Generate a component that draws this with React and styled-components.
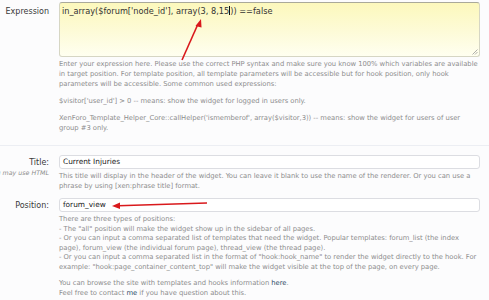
import React from "react";
import styled, { createGlobalStyle } from "styled-components";

const Global = createGlobalStyle`
  html, body { margin: 0; padding: 0; background: #fcfcfd; }
  body { width: 489px; height: 300px; overflow: hidden; font-family: "DejaVu Sans", Verdana, sans-serif; }
`;

const Page = styled.div`
  position: relative;
  width: 489px;
  padding-top: 2px;
`;

const Section = styled.div`
  padding-bottom: ${(p) => p.$pb || 0}px;
  border-bottom: ${(p) => (p.$sep ? "1px solid #eceef3" : "none")};
  margin-bottom: ${(p) => p.$mb || 0}px;
`;

const Row = styled.div`
  display: grid;
  grid-template-columns: 49px 421px;
  column-gap: 10px;
  margin-bottom: ${(p) => p.$mb || 0}px;
`;

const LabelCell = styled.div`
  display: flex;
  flex-direction: column;
  align-items: flex-end;
  padding-top: ${(p) => p.$pt || 0}px;
  min-width: 0;
`;

const Label = styled.div`
  font-size: 8px;
  color: #3a3a3a;
  white-space: nowrap;
  line-height: 10px;
`;

const Hint = styled.div`
  font-size: 6.3px;
  font-style: italic;
  color: #8c8c8c;
  white-space: nowrap;
  line-height: 8px;
  margin-top: 1px;
`;

const Field = styled.div`
  min-width: 0;
`;

const TextArea = styled.div`
  position: relative;
  height: 55px;
  box-sizing: border-box;
  border: 1px solid #d6d6c4;
  border-top-color: #a9a99a;
  border-radius: 3px;
  background: linear-gradient(to bottom, #fcf8bc 0%, #fdfbd8 55%, #fffff0 100%);
  padding: 3px 2px;
  font-size: 8.2px;
  line-height: 10px;
  color: #333;
  white-space: nowrap;
`;

const Caret = styled.span`
  display: inline-block;
  width: 1px;
  height: 9px;
  background: #111;
  vertical-align: -1px;
`;

const Grip = styled.svg`
  position: absolute;
  right: 1px;
  bottom: 1px;
`;

const Input = styled.div`
  height: 14px;
  box-sizing: border-box;
  border: 1px solid #dcdde2;
  border-radius: 3px;
  background: #fff;
  padding: 0 3px;
  font-size: 7.4px;
  line-height: 12px;
  color: #222;
  white-space: nowrap;
`;

const Desc = styled.div`
  margin-top: ${(p) => p.$mt || 2}px;
  font-size: 6.8px;
  letter-spacing: -0.03px;
  line-height: ${(p) => p.$lh || 10}px;
  color: #8d8d8d;
`;

const Para = styled.p`
  margin: 0 0 ${(p) => p.$gap || 0}px 0;
  white-space: nowrap;
`;

const Link = styled.a`
  color: #2d4a66;
  text-decoration: none;
`;

const Overlay = styled.svg`
  position: absolute;
  left: 0;
  top: 0;
  pointer-events: none;
`;

export default function App() {
  return (
    <Page>
      <Global />
      <Section $sep $pb={12} $mb={9}>
        <Row>
          <LabelCell $pt={5}>
            <Label>Expression</Label>
          </LabelCell>
          <Field>
            <TextArea>
              in_array($forum['node_id'], array(3, 8,15<Caret />)) ==false
              <Grip width="6" height="6" viewBox="0 0 6 6">
                <path d="M5.5 0.5 L0.5 5.5 M5.5 3 L3 5.5" stroke="#999" strokeWidth="0.8" />
              </Grip>
            </TextArea>
            <Desc $mt={2}>
              <Para>
                Enter your expression here. Please use the correct PHP syntax and make sure you know 100% which variables are available
              </Para>
              <Para>
                in target position. For template position, all template parameters will be accessible but for hook position, only hook
              </Para>
              <Para $gap={7}>parameters will be accessible. Some common used expressions:</Para>
              <Para $gap={7}>$visitor['user_id'] &gt; 0 -- means: show the widget for logged in users only.</Para>
              <Para>
                XenForo_Template_Helper_Core::callHelper('ismemberof', array($visitor,3)) -- means: show the widget for users of user
              </Para>
              <Para>group #3 only.</Para>
            </Desc>
          </Field>
        </Row>
      </Section>

      <Row $mb={7}>
        <LabelCell $pt={3}>
          <Label>Title:</Label>
          <Hint>you may use HTML</Hint>
        </LabelCell>
        <Field>
          <Input>Current Injuries</Input>
          <Desc $mt={2}>
            <Para>
              This title will display in the header of the widget. You can leave it blank to use the name of the renderer. Or you can use a
            </Para>
            <Para>phrase by using [xen:phrase title] format.</Para>
          </Desc>
        </Field>
      </Row>

      <Row>
        <LabelCell $pt={3}>
          <Label>Position:</Label>
        </LabelCell>
        <Field>
          <Input>forum_view</Input>
          <Desc $mt={3} $lh={9.5}>
            <Para>There are three types of positions:</Para>
            <Para>- The "all" position will make the widget show up in the sidebar of all pages.</Para>
            <Para>
              - Or you can input a comma separated list of templates that need the widget. Popular templates: forum_list (the index
            </Para>
            <Para>page), forum_view (the individual forum page), thread_view (the thread page).</Para>
            <Para>
              - Or you can input a comma separated list in the format of "hook:hook_name" to render the widget directly to the hook. For
            </Para>
            <Para $gap={7}>
              example: "hook:page_container_content_top" will make the widget visible at the top of the page, on every page.
            </Para>
            <Para>
              You can browse the site with templates and hooks information <Link href="#">here</Link>.
            </Para>
            <Para>
              Feel free to contact <Link href="#">me</Link> if you have question about this.
            </Para>
          </Desc>
        </Field>
      </Row>

      <Overlay width="489" height="300" viewBox="0 0 489 300">
        <line x1="182" y1="60" x2="198" y2="24" stroke="#d9191c" strokeWidth="1.6" />
        <path d="M201 19 L195.5 26 L201.5 27.5 Z" fill="#d9191c" />
        <line x1="207" y1="203" x2="118" y2="205.8" stroke="#d9191c" strokeWidth="1.6" />
        <path d="M112 206 L120 202.5 L120 209 Z" fill="#d9191c" />
      </Overlay>
    </Page>
  );
}
